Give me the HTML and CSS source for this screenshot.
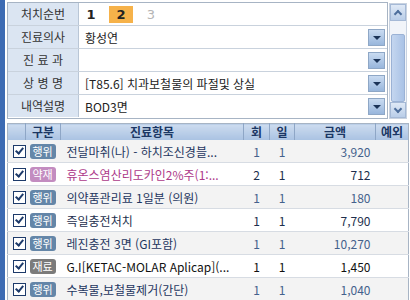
FILE: index.html
```html
<!DOCTYPE html>
<html lang="ko">
<head>
    <meta charset="UTF-8">
    <title>진료내역</title>
    <link rel="stylesheet" href="styles.css">
</head>
<body>
    <div class="frame">
        <div class="top">
            <div class="form">
                <div class="form-row">
                    <div class="label">처치순번</div>
                    <div class="value seq">
                        <span class="seq-num">1</span>
                        <span class="seq-num on">2</span>
                        <span class="seq-num off">3</span>
                    </div>
                </div>
                <div class="form-row">
                    <div class="label">진료의사</div>
                    <div class="value"><span class="text">황성연</span><span class="drop"></span></div>
                </div>
                <div class="form-row">
                    <div class="label">진 료 과</div>
                    <div class="value"><span class="text"></span><span class="drop"></span></div>
                </div>
                <div class="form-row">
                    <div class="label">상 병 명</div>
                    <div class="value"><span class="text">[T85.6] 치과보철물의 파절및 상실</span><span class="drop"></span></div>
                </div>
                <div class="form-row">
                    <div class="label">내역설명</div>
                    <div class="value"><span class="text">BOD3면</span><span class="drop"></span></div>
                </div>
            </div>
            <div class="scrollbar">
                <div class="sb-btn up"></div>
                <div class="sb-track"><div class="sb-thumb"></div></div>
                <div class="sb-btn down"></div>
            </div>
        </div>

        <table class="grid">
            <colgroup>
                <col style="width:18px"><col style="width:35px"><col style="width:183px">
                <col style="width:26px"><col style="width:25px"><col style="width:81px"><col style="width:33px">
            </colgroup>
            <thead>
                <tr><th></th><th>구분</th><th>진료항목</th><th>회</th><th>일</th><th>금액</th><th>예외</th></tr>
            </thead>
            <tbody>
                <tr class="odd">
                    <td><span class="chk"></span></td><td><span class="tag act">행위</span></td>
                    <td class="name">전달마취(나) -  하치조신경블...</td><td class="c">1</td><td class="c">1</td><td class="r">3,920</td><td></td>
                </tr>
                <tr class="drug">
                    <td><span class="chk"></span></td><td><span class="tag med">약재</span></td>
                    <td class="name">휴온스염산리도카인2%주(1:...</td><td class="c">2</td><td class="c">1</td><td class="r">712</td><td></td>
                </tr>
                <tr class="odd">
                    <td><span class="chk"></span></td><td><span class="tag act">행위</span></td>
                    <td class="name">의약품관리료 1일분 (의원)</td><td class="c">1</td><td class="c">1</td><td class="r">180</td><td></td>
                </tr>
                <tr>
                    <td><span class="chk"></span></td><td><span class="tag act">행위</span></td>
                    <td class="name">즉일충전처치</td><td class="c">1</td><td class="c">1</td><td class="r">7,790</td><td></td>
                </tr>
                <tr class="odd">
                    <td><span class="chk"></span></td><td><span class="tag act">행위</span></td>
                    <td class="name">레진충전 3면 (GI포함)</td><td class="c">1</td><td class="c">1</td><td class="r">10,270</td><td></td>
                </tr>
                <tr class="dark">
                    <td><span class="chk"></span></td><td><span class="tag mat">재료</span></td>
                    <td class="name">G.I[KETAC-MOLAR Aplicap](...</td><td class="c">1</td><td class="c">1</td><td class="r">1,450</td><td></td>
                </tr>
                <tr class="odd">
                    <td><span class="chk"></span></td><td><span class="tag act">행위</span></td>
                    <td class="name">수복물,보철물제거(간단)</td><td class="c">1</td><td class="c">1</td><td class="r">1,040</td><td></td>
                </tr>
            </tbody>
        </table>
    </div>
</body>
</html>
```

FILE: styles.css
```css
body {
    margin: 0;
    background: #fff;
    font-family: "Noto Sans CJK KR", "DejaVu Sans", sans-serif;
    font-size: 12px;
    color: #222;
    overflow: hidden;
}
.frame {
    border-left: 5px solid #3d6bb3;
    padding: 2px 0 0 2px;
    height: 298px;
}
.top {
    display: flex;
}
.form {
    width: 379px;
    border: 1px solid #a7b4c4;
}
.form-row {
    display: flex;
    height: 22px;
    border-bottom: 1px solid #c9d2dd;
}
.form-row:last-child {
    border-bottom: none;
}
.label {
    width: 70px;
    background: #dbe5f2;
    border-right: 1px solid #b9c6d6;
    color: #333;
    text-align: center;
    line-height: 22px;
    white-space: pre;
}
.value {
    flex: 1;
    display: flex;
    align-items: center;
    padding-left: 6px;
    padding-right: 2px;
}
.value .text {
    flex: 1;
}
.drop {
    width: 15px;
    height: 15px;
    border: 1px solid #8ea7c6;
    background: linear-gradient(#c9dbf1, #98b6dc);
    position: relative;
}
.drop::after {
    content: "";
    position: absolute;
    left: 4px;
    top: 6px;
    border-left: 4px solid transparent;
    border-right: 4px solid transparent;
    border-top: 4px solid #1c3458;
}
.seq {
    gap: 6px;
    padding-left: 0;
}
.seq-num {
    display: inline-block;
    width: 24px;
    height: 17px;
    line-height: 17px;
    text-align: center;
    font-weight: bold;
    font-family: "DejaVu Sans", sans-serif;
    font-size: 13px;
    color: #222;
}
.seq-num.on {
    background: #f6b24a;
}
.seq-num.off {
    color: #b5b5b5;
    font-weight: normal;
}
.scrollbar {
    width: 16px;
    margin-left: 1px;
    margin-top: 1px;
    height: 114px;
    display: flex;
    flex-direction: column;
    background: #f1f4f9;
    border: 1px solid #c8d2e0;
}
.sb-btn {
    height: 15px;
    background: linear-gradient(#dfe9f6, #b9cde8);
    border: 1px solid #a5b9d6;
    position: relative;
}
.sb-btn::after {
    content: "";
    position: absolute;
    left: 4px;
    top: 6px;
    width: 4px;
    height: 4px;
    border-left: 2px solid #4d6e9c;
    border-top: 2px solid #4d6e9c;
    transform: rotate(45deg);
}
.sb-btn.down::after {
    transform: rotate(225deg);
    top: 3px;
}
.sb-track {
    flex: 1;
    padding: 13px 0 0 0;
}
.sb-thumb {
    height: 66px;
    margin: 0 1px;
    background: linear-gradient(90deg, #c4d6ef, #a9c2e6);
    border: 1px solid #9bb2d5;
    border-radius: 2px;
}
.grid {
    margin-top: 4px;
    width: 402px;
    border-collapse: collapse;
    table-layout: fixed;
    border: 1px solid #a7b4c4;
}
.grid th {
    height: 16px;
    padding: 0;
    background: linear-gradient(#cddcef, #a9c2e2);
    border-right: 1px solid #8ea6c6;
    color: #1b3764;
    font-weight: bold;
    font-size: 12px;
    line-height: 16px;
}
.grid th:last-child {
    border-right: none;
}
.grid td {
    height: 22px;
    padding: 0;
    border-bottom: 1px solid #d7dce3;
    white-space: nowrap;
    overflow: hidden;
    color: #1d2f4d;
}
.grid tr.odd td {
    background: #f3f3f3;
    color: #44618c;
}
.grid tr.odd td.name {
    color: #1e3660;
}
.grid tr.drug td.name {
    color: #ad3a8a;
}
.grid tr.dark td {
    color: #111;
}
.grid td.name {
    padding-left: 6px;
}
.grid td.c {
    text-align: center;
}
.grid td.r {
    text-align: right;
    padding-right: 5px;
}
.chk {
    display: block;
    width: 11px;
    height: 11px;
    margin-left: 5px;
    border: 1px solid #1d3a6a;
    background: #fff;
    position: relative;
}
.chk::after {
    content: "";
    position: absolute;
    left: 3px;
    top: 0px;
    width: 3px;
    height: 6px;
    border-right: 2px solid #1d3a6a;
    border-bottom: 2px solid #1d3a6a;
    transform: rotate(40deg);
}
.tag {
    display: block;
    width: 26px;
    height: 15px;
    margin-left: 4px;
    border-radius: 3px;
    color: #fff;
    font-size: 11px;
    line-height: 15px;
    text-align: center;
}
.tag.act {
    background: #6486a8;
}
.tag.med {
    background: #c38cc0;
}
.tag.mat {
    background: #7b7b7b;
}
```
